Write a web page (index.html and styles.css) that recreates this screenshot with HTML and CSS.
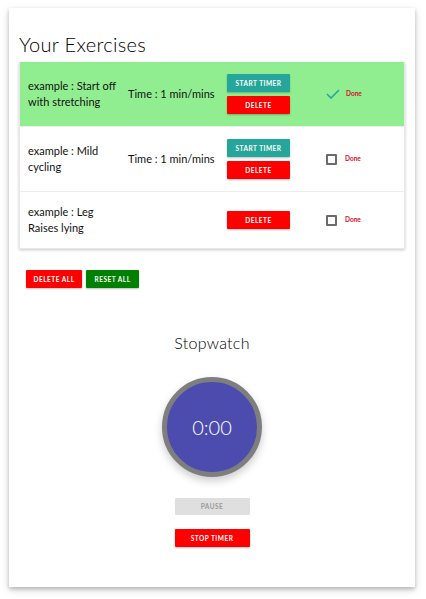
FILE: index.html
```html
<!DOCTYPE html>
<html>
<head>
<meta charset="utf-8">
<link rel="stylesheet" href="styles.css">
</head>
<body>
<div class="card">
  <h1 class="title">Your Exercises</h1>
  <div class="list">
    <div class="row done">
      <div class="name">example : Start off with stretching</div>
      <div class="time">Time : 1 min/mins</div>
      <div class="btns">
        <button class="btn teal">Start Timer</button>
        <button class="btn red">Delete</button>
      </div>
      <div class="check">
        <svg class="tick" width="14" height="10" viewBox="0 0 14 10"><path d="M1 5 L5 9 L13 1" fill="none" stroke="#26a69a" stroke-width="1.6"/></svg>
        <span class="donelbl">Done</span>
      </div>
    </div>
    <div class="row">
      <div class="name">example : Mild cycling</div>
      <div class="time">Time : 1 min/mins</div>
      <div class="btns">
        <button class="btn teal">Start Timer</button>
        <button class="btn red">Delete</button>
      </div>
      <div class="check">
        <span class="box"></span>
        <span class="donelbl">Done</span>
      </div>
    </div>
    <div class="row last">
      <div class="name">example : Leg Raises lying</div>
      <div class="time"></div>
      <div class="btns">
        <button class="btn red">Delete</button>
      </div>
      <div class="check">
        <span class="box"></span>
        <span class="donelbl">Done</span>
      </div>
    </div>
  </div>
  <div class="actions">
    <button class="btn red small">Delete All</button>
    <button class="btn green small">Reset All</button>
  </div>
  <div class="stopwatch">
    <h2 class="sw-title">Stopwatch</h2>
    <div class="dial"><span class="dial-time">0:00</span></div>
    <button class="btn grey wide">Pause</button>
    <button class="btn red wide">Stop Timer</button>
  </div>
</div>
</body>
</html>
```
FILE: styles.css
```css
html, body { margin: 0; padding: 0; background: #fff; }
body { font-family: Lato, "Open Sans", sans-serif; color: #111; }
.card {
  margin: 8px 11px 12px 9px;
  width: 406px;
  height: 579px;
  box-sizing: border-box;
  padding: 21px 10px 0 10px;
  background: #fff;
  box-shadow: 0 2px 4px rgba(0,0,0,0.2), 0 3px 8px rgba(0,0,0,0.15);
}
.title {
  margin: 0 0 3px 0;
  font-size: 20px;
  font-weight: 300;
  line-height: 30px;
  height: 30px;
  letter-spacing: 0.3px;
  color: #000;
}
.list {
  box-shadow: 0 1px 3px rgba(0,0,0,0.22);
  border: 1px solid #e8e8e8;
  border-top: none;
}
.row {
  display: grid;
  grid-template-columns: 100px 99px 63px 1fr;
  align-items: center;
  padding: 12px 0 12px 8px;
  border-bottom: 1px solid #eee;
  font-size: 11px;
  line-height: 16px;
  min-height: 32px;
}
.row.last { border-bottom: none; }
.row.done { background: #90ee90; }
.name { padding-right: 4px; }
.btns { display: flex; flex-direction: column; gap: 4px; }
.btn {
  border: none;
  font-family: Lato, sans-serif;
  font-weight: 700;
  font-size: 6.5px;
  letter-spacing: 0.5px;
  text-transform: uppercase;
  color: #fff;
  height: 18px;
  padding: 0;
  box-shadow: 0 1px 2px rgba(0,0,0,0.25);
  border-radius: 1px;
}
.btns .btn { width: 63px; }
.teal { background: #26a69a; }
.red { background: #ff0000; }
.green { background: #008000; }
.grey { background: #dfdfdf; color: #9a9a9a; box-shadow: none; }
.check {
  display: flex;
  align-items: center;
  padding-left: 36px;
}
.tick { margin-left: 0; margin-right: 6px; }
.box {
  width: 7px; height: 7px;
  border: 2px solid #6b6b6b;
  border-radius: 1px;
  margin-left: 0;
  margin-right: 8px;
}
.donelbl { font-size: 6.5px; color: #d0102a; font-weight: 700; }
.actions {
  display: flex;
  gap: 4px;
  margin: 21px 0 0 7px;
}
.small { width: 56px; }
.green.small { width: 53px; }
.stopwatch {
  display: flex;
  flex-direction: column;
  align-items: center;
}
.sw-title {
  margin: 44px 0 0 0;
  font-size: 16px;
  font-weight: 300;
  line-height: 22px;
  letter-spacing: 0.3px;
  color: #000;
}
.dial {
  margin-top: 23px;
  width: 100px; height: 100px;
  box-sizing: border-box;
  border-radius: 50%;
  border: 5px solid #7e7e7e;
  background: #4c4cae;
  display: flex; align-items: center; justify-content: center;
  box-shadow: 0 4px 8px rgba(0,0,0,0.2);
}
.dial-time { color: #fff; font-size: 20px; font-weight: 300; }
.wide { width: 75px; }
.grey.wide { margin-top: 21px; height: 17px; }
.red.wide { margin-top: 14px; }
```
